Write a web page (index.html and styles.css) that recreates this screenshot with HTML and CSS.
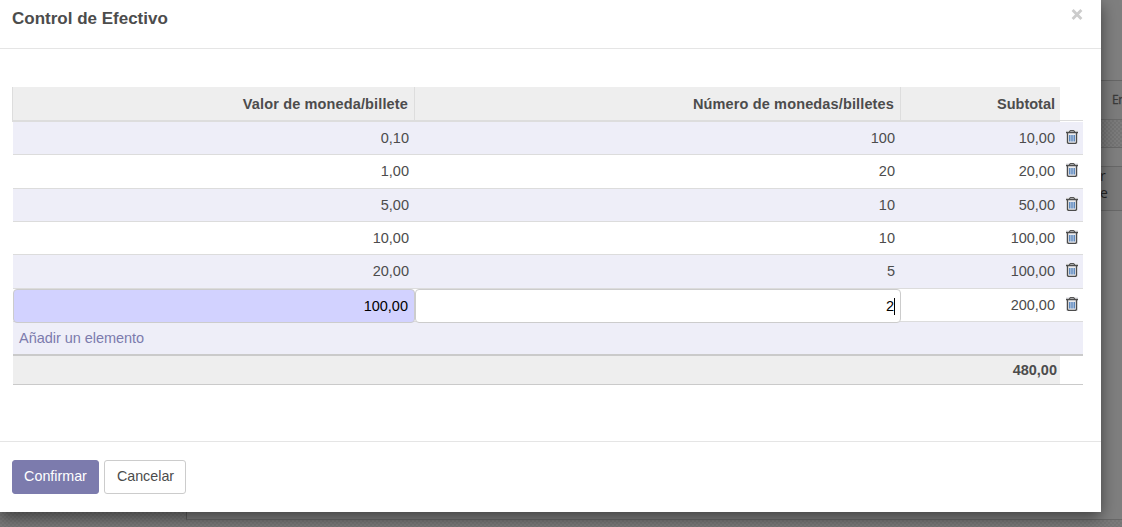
FILE: index.html
```
<!DOCTYPE html>
<html lang="es">
<head>
<meta charset="utf-8">
<title>Control de Efectivo</title>
<link rel="stylesheet" href="styles.css">
</head>
<body>
<svg width="0" height="0" class="defs" aria-hidden="true">
  <symbol id="trash" viewBox="0 0 12 14">
    <rect x="0" y="0" width="12" height="14" fill="#ebebee"/>
    <path d="M3.5 2.5V1.5L4.5 .6H7.5L8.5 1.5V2.5" fill="none" stroke="#555" stroke-width="1.1"/>
    <path d="M0 2.5H12M1.5 3V12.5L2.2 13.3H9.8L10.5 12.5V3" fill="none" stroke="#4c4c4c" stroke-width="1.3"/>
    <path d="M3.8 5V11.5M6 5V11.5M8.2 5V11.5" stroke="#4579b8" stroke-width="1.3"/>
  </symbol>
</svg>
<div class="backdrop">
  <div class="page-side">
    <div class="side-top"></div>
    <div class="side-tab">En</div>
    <div class="side-hatch"></div>
    <div class="side-gap"></div>
    <div class="side-head"><span>r</span><span>e</span></div>
  </div>
  <div class="page-foot"><div class="sheet-end"></div></div>
</div>
<main class="modal">
  <header class="modal-head"><h1>Control de Efectivo</h1><svg class="close" viewBox="0 0 10 10"><path d="M1 1L9 9M9 1L1 9"/></svg></header>
  <section class="modal-body">
    <div class="list">
      <div class="row head"><b>Valor de moneda/billete</b><b>Número de monedas/billetes</b><b>Subtotal</b><i></i></div>
      <div class="row r1 odd"><span>0,10</span><span>100</span><span>10,00</span><i><svg><use href="#trash"/></svg></i></div>
      <div class="row r2"><span>1,00</span><span>20</span><span>20,00</span><i><svg><use href="#trash"/></svg></i></div>
      <div class="row r3 odd"><span>5,00</span><span>10</span><span>50,00</span><i><svg><use href="#trash"/></svg></i></div>
      <div class="row r4"><span>10,00</span><span>10</span><span>100,00</span><i><svg><use href="#trash"/></svg></i></div>
      <div class="row r5 odd"><span>20,00</span><span>5</span><span>100,00</span><i><svg><use href="#trash"/></svg></i></div>
      <div class="row r6"><div class="field required">100,00</div><div class="field">2<span class="caret"></span></div><span>200,00</span><i><svg><use href="#trash"/></svg></i></div>
      <div class="row add odd"><a>Añadir un elemento</a></div>
      <div class="row total"><b>480,00</b></div>
    </div>
  </section>
  <footer class="modal-foot"><button class="btn primary">Confirmar</button><button class="btn">Cancelar</button></footer>
</main>
</body>
</html>
```
FILE: styles.css
```
* { box-sizing: border-box; }
body { margin: 0; width: 1122px; height: 527px; overflow: hidden; background: #7f7f7f; font: 14.5px/20px "Liberation Sans", Arial, sans-serif; color: #4c4c4c; }
.defs { position: absolute; }

.backdrop { position: absolute; inset: 0; display: flex; flex-direction: column; align-items: flex-end; justify-content: space-between; background: #7f7f7f; }
.page-side { width: 32px; color: #3a3a3a; }
.side-top { height: 81px; border-bottom: 1px solid #666; }
.side-tab { height: 39px; padding: 9px 0 0 22px; border-bottom: 1px solid #6a6a6a; background: #7c7c7c; font: 12px/20px "Open Sans", sans-serif; letter-spacing: -.4px; white-space: nowrap; -webkit-text-stroke: .3px #3a3a3a; }
.side-hatch { height: 28px; border-bottom: 1px solid #686868; background: repeating-conic-gradient(#747474 0 25%, #7c7c7c 0 50%) 0 0 / 4px 4px; }
.side-gap { height: 19px; border-bottom: 1px solid #686868; }
.side-head { height: 44px; padding: 0 0 0 10px; border-bottom: 1px solid #686868; background: #7a7a7a; color: #262626; display: flex; flex-direction: column; font: 14px/17px "Open Sans", sans-serif; }
.page-foot { width: 100%; height: 15px; background: repeating-conic-gradient(#757575 0 25%, #7b7b7b 0 50%) 0 0 / 4px 4px; }
.sheet-end { margin-left: 186px; height: 8px; background: #7f7f7f; border-left: 1px solid #5d5d5d; border-bottom: 1px solid #686868; }

.modal { position: relative; width: 1101px; height: 512px; background: #fff; box-shadow: 0 5px 15px rgba(0,0,0,.5); display: flex; flex-direction: column; }
.modal-head { height: 49px; border-bottom: 1px solid #e5e5e5; padding: 0 18px 0 12px; display: flex; justify-content: space-between; }
h1 { margin: 9px 0 0; font-size: 17px; line-height: 20px; }
.close { width: 12px; height: 11px; margin-top: 9px; stroke: #ccc; stroke-width: 2.6; }
.modal-body { height: 393px; padding: 38px 18px 0 12px; border-bottom: 1px solid #e5e5e5; }

.list { width: 1071px; }
.row { display: grid; grid-template-columns: 402px 486px 160px 23px; height: 33px; }
.row > span, .row > b { text-align: right; padding: 6px 5px 0 0; }
.row > i { display: flex; justify-content: center; padding: 8px 0 0 1px; }
.row > i svg { width: 12px; height: 14px; }
.row:not(.head) { margin-left: 1px; grid-template-columns: 401px 486px 160px 23px; border-bottom: 1px solid #dcdcdc; }
.odd { background: #eeeef8; }
.row.head { height: 35px; }
.head b { background: #eee; border-bottom: 2px solid #ddd; border-left: 1px solid #ddd; padding: 7px 6px 0 0; letter-spacing: .14px; }
.head b:nth-child(3) { padding-right: 5px; letter-spacing: 0; }
.head i { height: 34px; border-bottom: 1px solid #ddd; }
.row.r2, .row.r5 { height: 34px; }
.row.add { height: 34px; border-bottom: 2px solid #cacaca; }
.add a { padding: 6px 0 0 6px; color: #7c7bad; letter-spacing: -.04px; }
.row.total { height: 29px; border-bottom: 1px solid #cacaca; }
.total b { grid-column: 1 / 4; background: #eee; padding: 4px 3px 0 0; }
.field { height: 34px; border: 1px solid #ccc; border-radius: 4px; background: #fff; color: #000; text-align: right; padding: 6px 6px 0 0; position: relative; z-index: 1; }
.field.required { background: #d2d2ff; width: 402px; }
.field + .field { margin-left: 1px; width: 486px; padding-right: 5px; }
.caret { display: inline-block; width: 1px; height: 17px; background: #000; vertical-align: -4px; }

.modal-foot { padding: 18px 12px; display: flex; gap: 5px; }
.btn { height: 34px; width: 82px; border: 1px solid #ccc; border-radius: 3px; background: #fff; color: #4c4c4c; font: 14.3px/20px "Liberation Sans", Arial, sans-serif; padding: 0 0 2px 1px; }
.btn.primary { width: 87px; background: #7c7bad; border-color: #7c7bad; color: #fff; padding-left: 0; }
```
